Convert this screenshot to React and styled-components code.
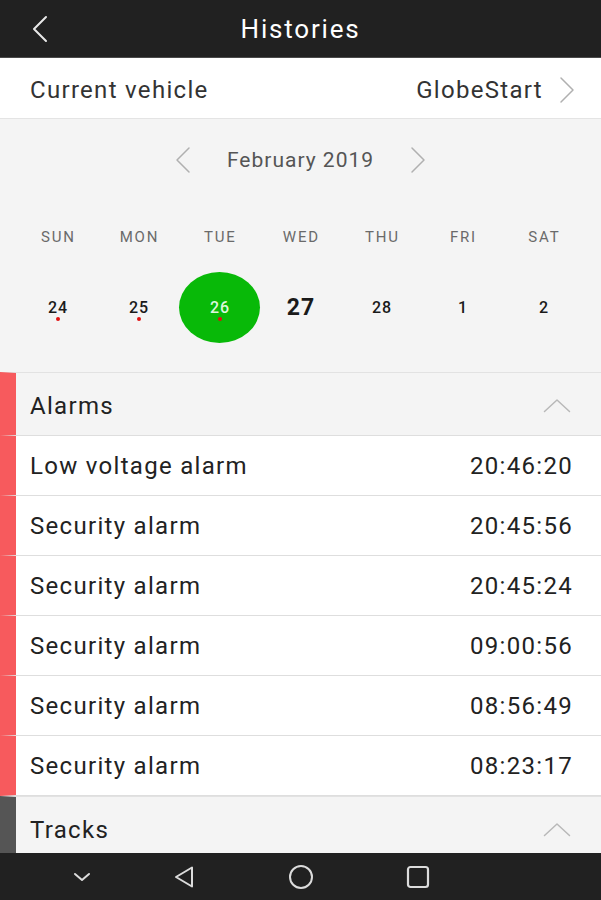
import React from "react";
import styled, { createGlobalStyle } from "styled-components";

const GlobalStyle = createGlobalStyle`
  html, body { margin: 0; padding: 0; background: #f4f4f4; }
  body { font-family: Roboto, "Noto Sans", "Liberation Sans", sans-serif; }
  * { box-sizing: border-box; }
`;

const Screen = styled.div`
  width: 601px;
  height: 900px;
  display: flex;
  flex-direction: column;
  overflow: hidden;
  background: #f4f4f4;
`;

const TopBar = styled.header`
  height: 58px;
  flex: none;
  background: #212121;
  border-bottom: 1px solid #4a4a4a;
  display: grid;
  grid-template-columns: 80px 1fr 80px;
  align-items: center;
`;

const BackButton = styled.button`
  background: none;
  border: none;
  padding: 0 0 0 32px;
  height: 100%;
  display: flex;
  align-items: center;
  cursor: pointer;
`;

const Title = styled.h1`
  margin: 0;
  text-align: center;
  color: #ffffff;
  font-size: 26px;
  font-weight: 400;
  letter-spacing: 1.8px;
`;

const Content = styled.div`
  flex: 1;
  min-height: 0;
  overflow: hidden;
  display: flex;
  flex-direction: column;
`;

const VehicleRow = styled.div`
  height: 61px;
  flex: none;
  background: #ffffff;
  border-bottom: 1px solid #e4e4e4;
  display: flex;
  align-items: center;
  justify-content: space-between;
  padding: 3px 26px 0 30px;
`;

const RowLabel = styled.span`
  font-size: 24px;
  color: ${(p) => p.$color || "#222222"};
  letter-spacing: 1.3px;
`;

const VehicleValue = styled.div`
  display: flex;
  align-items: center;
  gap: 16px;
`;

const Calendar = styled.section`
  height: 253px;
  flex: none;
  background: #f4f4f4;
  padding: 0 17px;
  display: flex;
  flex-direction: column;
`;

const MonthNav = styled.div`
  height: 82px;
  display: flex;
  align-items: center;
  justify-content: center;
  gap: 36px;
`;

const NavArrow = styled.button`
  background: none;
  border: none;
  padding: 0;
  display: flex;
  cursor: pointer;
`;

const MonthLabel = styled.span`
  font-size: 21px;
  color: #555555;
  letter-spacing: 1px;
`;

const WeekGrid = styled.div`
  display: grid;
  grid-template-columns: repeat(7, 1fr);
  align-items: center;
  justify-items: center;
  height: ${(p) => p.$h}px;
`;

const WeekDay = styled.span`
  font-size: 15px;
  color: #6a6a6a;
  letter-spacing: 1.8px;
  margin-right: -1.8px;
`;

const DayCell = styled.div`
  position: relative;
  width: 81px;
  height: 71px;
  border-radius: 50%;
  display: flex;
  align-items: center;
  justify-content: center;
  background: ${(p) => (p.$selected ? "#08b908" : "transparent")};
`;

const DayNum = styled.span`
  font-size: ${(p) => (p.$today ? "23px" : "16px")};
  font-weight: ${(p) => (p.$today ? 700 : 500)};
  letter-spacing: ${(p) => (p.$today ? "1px" : "0.8px")};
  margin-right: ${(p) => (p.$today ? "-1px" : "-0.8px")};
  color: ${(p) => (p.$selected ? "#dcf7dc" : "#1a1a1a")};
`;

const EventDot = styled.span`
  position: absolute;
  left: 50%;
  top: 45px;
  width: 4px;
  height: 4px;
  margin-left: -2px;
  border-radius: 50%;
  background: #e01010;
`;

const SectionHeader = styled.div`
  height: 64px;
  flex: none;
  display: flex;
  align-items: center;
  justify-content: space-between;
  background: #f4f4f4;
  border-top: 1px solid #e2e2e2;
  border-bottom: 1px solid #dedede;
  border-left: 16px solid ${(p) => p.$accent};
  padding: 3px 30px 0 14px;
`;

const ItemRow = styled.div`
  height: 60px;
  flex: none;
  display: flex;
  align-items: center;
  justify-content: space-between;
  background: #ffffff;
  border-bottom: 1px solid #dedede;
  border-left: 16px solid ${(p) => p.$accent};
  padding: 1px 28px 0 14px;
`;

const BottomNav = styled.nav`
  height: 47px;
  flex: none;
  background: #212121;
  display: flex;
  align-items: center;
  padding-left: 62px;
`;

const NavSlot = styled.div`
  width: 40px;
  display: flex;
  justify-content: center;
  margin-left: ${(p) => p.$ml || 0}px;
`;

const RightChevron = ({ color = "#b0b0b0", w = 1.5 }) => (
  <svg width="16" height="28" viewBox="0 0 16 28" fill="none">
    <path d="M2 2 L14 14 L2 26" stroke={color} strokeWidth={w} strokeLinecap="round" strokeLinejoin="round" />
  </svg>
);

const LeftChevron = ({ color = "#b0b0b0", w = 1.5 }) => (
  <svg width="16" height="28" viewBox="0 0 16 28" fill="none">
    <path d="M14 2 L2 14 L14 26" stroke={color} strokeWidth={w} strokeLinecap="round" strokeLinejoin="round" />
  </svg>
);

const UpChevron = () => (
  <svg width="28" height="15" viewBox="0 0 28 15" fill="none">
    <path d="M1.5 13.5 L14 2 L26.5 13.5" stroke="#b8b8b8" strokeWidth="1.5" strokeLinecap="round" strokeLinejoin="round" />
  </svg>
);

const alarms = [
  ["Low voltage alarm", "20:46:20"],
  ["Security alarm", "20:45:56"],
  ["Security alarm", "20:45:24"],
  ["Security alarm", "09:00:56"],
  ["Security alarm", "08:56:49"],
  ["Security alarm", "08:23:17"],
];

const days = [
  { n: "24", dot: true },
  { n: "25", dot: true },
  { n: "26", dot: true, selected: true },
  { n: "27", today: true },
  { n: "28" },
  { n: "1" },
  { n: "2" },
];

const weekdays = ["SUN", "MON", "TUE", "WED", "THU", "FRI", "SAT"];

export default function App() {
  return (
    <>
      <GlobalStyle />
      <Screen>
        <TopBar>
          <BackButton aria-label="Back">
            <LeftChevron color="#e8e8e8" w={2} />
          </BackButton>
          <Title>Histories</Title>
          <div />
        </TopBar>

        <Content>
          <VehicleRow>
            <RowLabel $color="#333">Current vehicle</RowLabel>
            <VehicleValue>
              <RowLabel $color="#333">GlobeStart</RowLabel>
              <RightChevron />
            </VehicleValue>
          </VehicleRow>

          <Calendar>
            <MonthNav>
              <NavArrow aria-label="Previous month">
                <LeftChevron />
              </NavArrow>
              <MonthLabel>February 2019</MonthLabel>
              <NavArrow aria-label="Next month">
                <RightChevron />
              </NavArrow>
            </MonthNav>
            <WeekGrid $h={71}>
              {weekdays.map((d) => (
                <WeekDay key={d}>{d}</WeekDay>
              ))}
            </WeekGrid>
            <WeekGrid $h={71}>
              {days.map((d) => (
                <DayCell key={d.n} $selected={d.selected}>
                  <DayNum $today={d.today} $selected={d.selected}>{d.n}</DayNum>
                  {d.dot && <EventDot />}
                </DayCell>
              ))}
            </WeekGrid>
          </Calendar>

          <SectionHeader $accent="#f75a5d">
            <RowLabel>Alarms</RowLabel>
            <UpChevron />
          </SectionHeader>
          {alarms.map(([name, time], i) => (
            <ItemRow key={i} $accent="#f75a5d">
              <RowLabel>{name}</RowLabel>
              <RowLabel>{time}</RowLabel>
            </ItemRow>
          ))}
          <SectionHeader $accent="#555555">
            <RowLabel>Tracks</RowLabel>
            <UpChevron />
          </SectionHeader>
        </Content>

        <BottomNav>
          <NavSlot>
            <svg width="20" height="12" viewBox="0 0 20 12" fill="none">
              <path d="M3 3 L10 9 L17 3" stroke="#dcdcdc" strokeWidth="2" strokeLinecap="round" strokeLinejoin="round" />
            </svg>
          </NavSlot>
          <NavSlot $ml={62}>
            <svg width="24" height="24" viewBox="0 0 24 24" fill="none">
              <path d="M20 2.5 L20 21.5 L4 12 Z" stroke="#dcdcdc" strokeWidth="2" strokeLinejoin="round" />
            </svg>
          </NavSlot>
          <NavSlot $ml={77}>
            <svg width="26" height="26" viewBox="0 0 26 26" fill="none">
              <circle cx="13" cy="13" r="11" stroke="#dcdcdc" strokeWidth="2" />
            </svg>
          </NavSlot>
          <NavSlot $ml={77}>
            <svg width="24" height="24" viewBox="0 0 24 24" fill="none">
              <rect x="2" y="2" width="20" height="20" rx="2.5" stroke="#dcdcdc" strokeWidth="2.2" />
            </svg>
          </NavSlot>
        </BottomNav>
      </Screen>
    </>
  );
}
